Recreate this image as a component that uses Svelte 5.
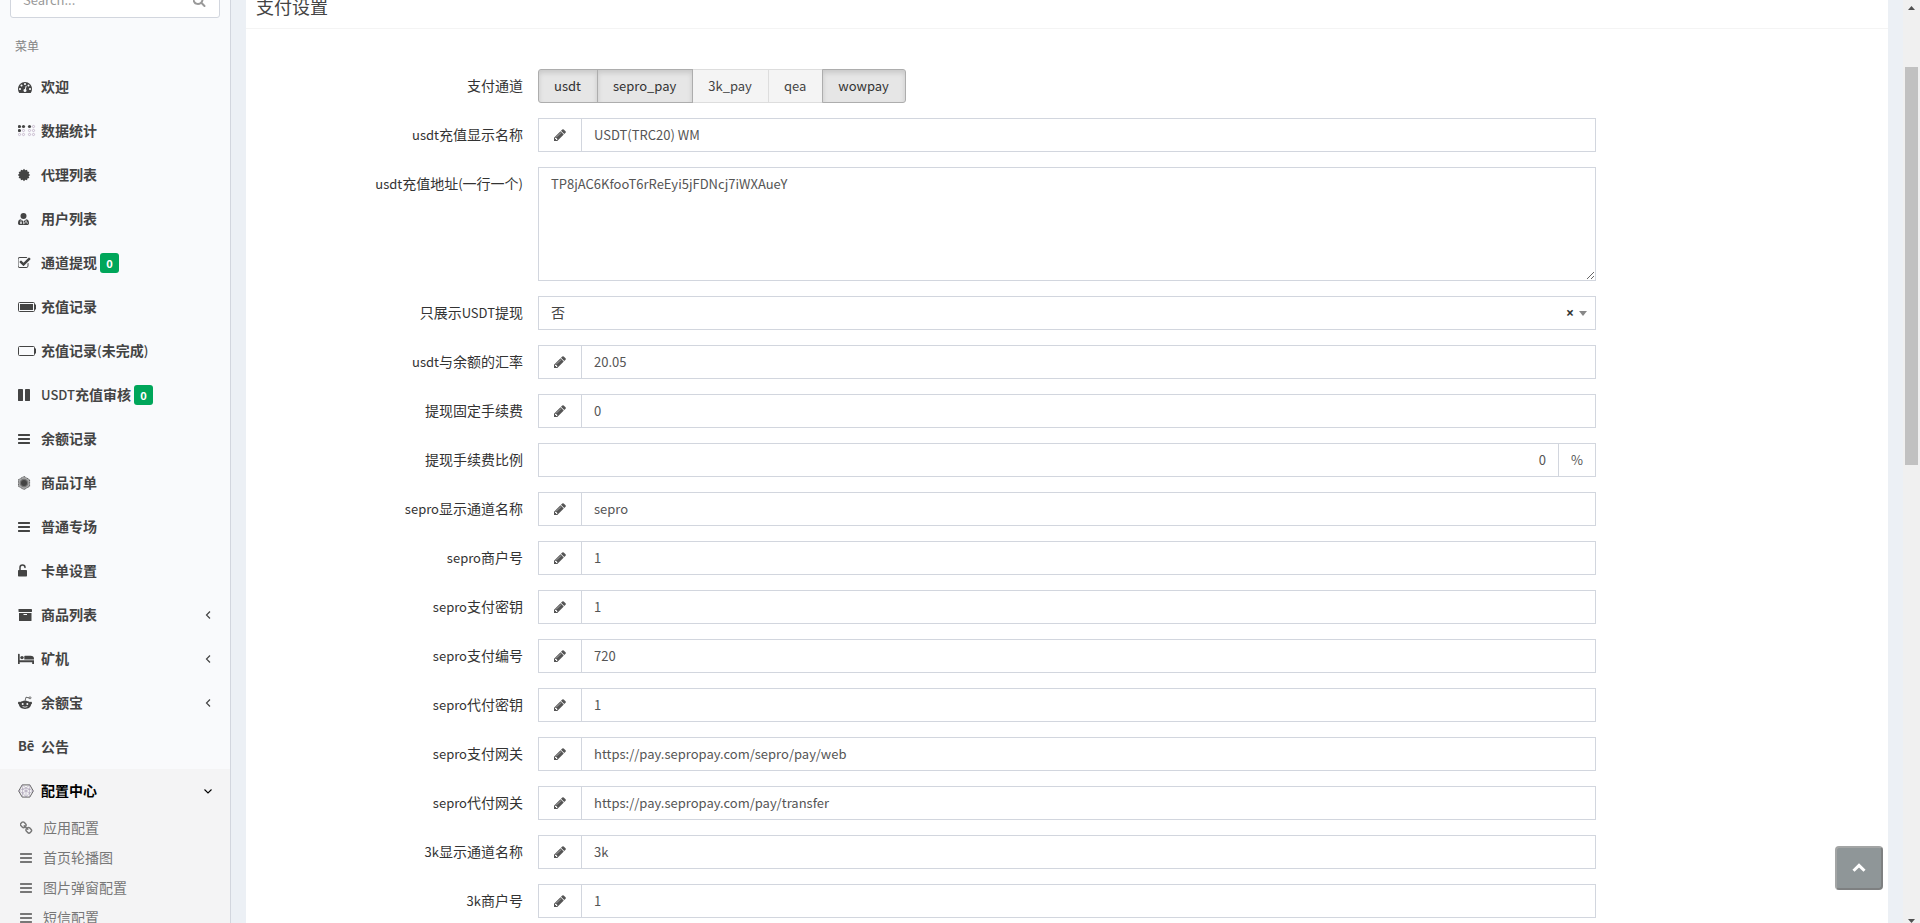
<script>
  const menu = [
    { icon: 'gauge', text: '欢迎' },
    { icon: 'braille', text: '数据统计' },
    { icon: 'certificate', text: '代理列表' },
    { icon: 'doctor', text: '用户列表' },
    { icon: 'check', text: '通道提现', badge: '0' },
    { icon: 'battery-full', text: '充值记录' },
    { icon: 'battery-empty', text: '充值记录(未完成)' },
    { icon: 'pause', text: 'USDT充值审核', badge: '0' },
    { icon: 'bars', text: '余额记录' },
    { icon: 'order', text: '商品订单' },
    { icon: 'bars', text: '普通专场' },
    { icon: 'unlock', text: '卡单设置' },
    { icon: 'archive', text: '商品列表', tree: true },
    { icon: 'bed', text: '矿机', tree: true },
    { icon: 'alien', text: '余额宝', tree: true },
    { icon: 'be', text: '公告' },
  ];

  const submenu = [
    { icon: 'link', text: '应用配置' },
    { icon: 'bars', text: '首页轮播图' },
    { icon: 'bars', text: '图片弹窗配置' },
    { icon: 'bars', text: '短信配置' },
  ];

  const channels = [
    { name: 'usdt', on: true },
    { name: 'sepro_pay', on: true },
    { name: '3k_pay', on: false },
    { name: 'qea', on: false },
    { name: 'wowpay', on: true },
  ];

  const fields = [
    { id: 'usdt-name', label: 'usdt充值显示名称', value: 'USDT(TRC20) WM' },
    { id: 'usdt-address', label: 'usdt充值地址(一行一个)', value: 'TP8jAC6KfooT6rReEyi5jFDNcj7iWXAueY', kind: 'area' },
    { id: 'usdt-only', label: '只展示USDT提现', value: '否', kind: 'select' },
    { id: 'usdt-rate', label: 'usdt与余额的汇率', value: '20.05' },
    { id: 'fee-fixed', label: '提现固定手续费', value: '0' },
    { id: 'fee-percent', label: '提现手续费比例', value: '0', kind: 'percent' },
    { id: 'sepro-name', label: 'sepro显示通道名称', value: 'sepro' },
    { id: 'sepro-merchant', label: 'sepro商户号', value: '1' },
    { id: 'sepro-pay-key', label: 'sepro支付密钥', value: '1' },
    { id: 'sepro-pay-code', label: 'sepro支付编号', value: '720' },
    { id: 'sepro-payout-key', label: 'sepro代付密钥', value: '1' },
    { id: 'sepro-pay-gateway', label: 'sepro支付网关', value: 'https://pay.sepropay.com/sepro/pay/web' },
    { id: 'sepro-payout-gateway', label: 'sepro代付网关', value: 'https://pay.sepropay.com/pay/transfer' },
    { id: '3k-name', label: '3k显示通道名称', value: '3k' },
    { id: '3k-merchant', label: '3k商户号', value: '1' },
  ];

  // Splits a label into runs of Latin and Chinese characters.
  const runs = (text) => text.match(/[\x20-\x7e]+|[^\x20-\x7e]+/g);
  const isLatin = (run) => /^[\x20-\x7e]/.test(run);

  const star = Array.from({ length: 24 }, (_, i) => {
    const r = i % 2 ? 4.8 : 6.2;
    const a = (i * Math.PI) / 12;
    return `${(6 + r * Math.sin(a)).toFixed(2)},${(7 - r * Math.cos(a)).toFixed(2)}`;
  }).join(' ');

  const filledDots = ['0-0', '4-0', '0-4', '10-0'];
</script>

{#snippet mixed(text)}
  {#each runs(text) as run}{#if isLatin(run)}<span class="latin">{run}</span>{:else}{run}{/if}{/each}
{/snippet}

{#snippet fa(d)}
  <svg width="14" height="14" viewBox="128 0 1792 1792" fill="currentColor" aria-hidden="true"><path {d} /></svg>
{/snippet}

{#snippet icon(name)}
  {#if name === 'bars'}
    {@render fa('M1664 1344v128q0 26-19 45t-45 19h-1408q-26 0-45-19t-19-45v-128q0-26 19-45t45-19h1408q26 0 45 19t19 45zm0-512v128q0 26-19 45t-45 19h-1408q-26 0-45-19t-19-45v-128q0-26 19-45t45-19h1408q26 0 45 19t19 45zm0-512v128q0 26-19 45t-45 19h-1408q-26 0-45-19t-19-45v-128q0-26 19-45t45-19h1408q26 0 45 19t19 45z')}
  {:else if name === 'pencil'}
    {@render fa('M491 1536l91-91-235-235-91 91v107h128v128h107zm523-928q0-22-22-22-10 0-17 7l-542 542q-7 7-7 17 0 22 22 22 10 0 17-7l542-542q7-7 7-17zm-54-192l416 416-832 832h-416v-416zm683 96q0 53-37 90l-166 166-416-416 166-165q36-38 90-38 53 0 91 38l235 234q37 39 37 91z')}
  {:else if name === 'search'}
    {@render fa('M1216 832q0-185-131.500-316.500t-316.500-131.500-316.500 131.500-131.500 316.500 131.500 316.500 316.500 131.500 316.500-131.500 131.500-316.500zm512 832q0 52-38 90t-90 38q-54 0-90-38l-343-342q-179 124-399 124-143 0-273.500-55.500t-225-150-150-225-55.500-273.500 55.500-273.500 150-225 225-150 273.500-55.500 273.500 55.500 225 150 150 225 55.500 273.500q0 220-124 399l343 343q37 37 37 90z')}
  {:else if name === 'check'}
    {@render fa('M1472 930v318q0 119-84.500 203.500t-203.500 84.500h-832q-119 0-203.500-84.500t-84.500-203.500v-832q0-119 84.500-203.500t203.500-84.500h832q63 0 117 25 15 7 18 23 3 17-9 29l-49 49q-10 10-23 10-3 0-9-2-23-6-45-6h-832q-66 0-113 47t-47 113v832q0 66 47 113t113 47h832q66 0 113-47t47-113v-254q0-13 9-22l64-64q10-10 23-10 6 0 12 3 20 8 20 29zm231-489l-814 814q-24 24-57 24t-57-24l-430-430q-24-24-24-57t24-57l110-110q24-24 57-24t57 24l263 263 647-647q24-24 57-24t57 24l110 110q24 24 24 57t-24 57z')}
  {:else if name === 'link'}
    {@render fa('M1520 1216q0-40-28-68l-208-208q-28-28-68-28-42 0-72 32 3 3 19 18.500t21.500 21.500 15 19 13 25.500 3.500 27.500q0 40-28 68t-68 28q-15 0-27.500-3.500t-25.500-13-19-15-21.500-21.500-18.500-19q-33 31-33 73 0 40 28 68l206 207q27 27 68 27 40 0 68-26l147-146q28-28 28-67zm-703-705q0-40-28-68l-206-207q-28-28-68-28-39 0-68 27l-147 146q-28 28-28 67 0 40 28 68l208 208q27 27 68 27 42 0 72-31-3-3-19-18.500t-21.500-21.500-15-19-13-25.500-3.500-27.500q0-40 28-68t68-28q15 0 27.500 3.500t25.500 13 19 15 21.500 21.500 18.500 19q33-31 33-73zm895 705q0 120-85 203l-147 146q-83 83-203 83-121 0-204-85l-206-207q-83-83-83-203 0-123 88-209l-88-88q-86 88-208 88-120 0-204-84l-208-208q-84-84-84-204t85-203l147-146q83-83 203-83 121 0 204 85l206 207q83 83 83 203 0 123-88 209l88 88q86-88 208-88 120 0 204 84l208 208q84 84 84 204z')}
  {:else if name === 'gauge'}
    <svg width="14" height="14" viewBox="0 0 1792 1792" fill="currentColor" aria-hidden="true"><path d="M384 1152q0-53-37.500-90.500t-90.500-37.500-90.500 37.500-37.500 90.500 37.500 90.500 90.500 37.500 90.500-37.500 37.500-90.500zm192-448q0-53-37.500-90.500t-90.500-37.500-90.500 37.500-37.500 90.500 37.500 90.500 90.500 37.500 90.500-37.500 37.500-90.500zm428 481l101-382q6-26-7.500-48.500t-38.500-29.500-48 6.500-30 39.500l-101 382q-60 5-107 43.500t-63 98.500q-20 77 20 146t117 89 146-20 89-117q16-60-6-117t-72-91zm660-33q0-53-37.500-90.500t-90.500-37.500-90.500 37.500-37.500 90.500 37.500 90.500 90.500 37.500 90.500-37.500 37.500-90.500zm-640-640q0-53-37.500-90.500t-90.500-37.500-90.500 37.500-37.500 90.500 37.500 90.500 90.500 37.500 90.500-37.500 37.500-90.500zm448 192q0-53-37.500-90.500t-90.500-37.500-90.500 37.500-37.500 90.500 37.500 90.500 90.500 37.500 90.500-37.500 37.500-90.500zm320 448q0 261-141 483-19 29-54 29h-1402q-35 0-54-29-141-221-141-483 0-182 71-348t191-286 286-191 348-71 348 71 286 191 191 286 71 348z" /></svg>
  {:else}
    <svg width="18" height="14" viewBox="0 0 18 14" fill="currentColor" aria-hidden="true">
      {#if name === 'braille'}
        {#each [0, 4, 10, 14] as x}
          {#each [0, 4, 8] as y}
            {#if filledDots.includes(`${x}-${y}`)}
              <circle cx={x + 1.5} cy={y + 2.5} r="1.6" />
            {:else}
              <circle cx={x + 1.5} cy={y + 2.5} r="1.1" fill="none" stroke="#c3b4ca" stroke-width="0.9" />
            {/if}
          {/each}
        {/each}
      {:else if name === 'certificate'}
        <polygon points={star} />
      {:else if name === 'doctor'}
        <circle cx="5.500" cy="4" r="3" />
        <path d="M2.500 7.200 5.500 9.200l3-2C10.300 7.500 11 9 11 11.200c0 1.200-.7 1.800-1.800 1.800H1.800C.7 13 0 12.400 0 11.200 0 9 .7 7.500 2.500 7.200z" />
        <path d="M3 8.200v2.300M8 8.200v1.600M6.700 11.800v-1q0-1 1.300-1t1.300 1v1M5.500 9.200v3" fill="none" stroke="#f9fafc" stroke-width=".7" />
        <circle cx="3" cy="11" r=".9" fill="#f9fafc" />
      {:else if name === 'battery-full' || name === 'battery-empty'}
        <rect x=".5" y="2.500" width="16" height="9" rx="1" fill="none" stroke="currentColor" />
        <path d="M17 4.500h1v5h-1z" />
        {#if name === 'battery-full'}<rect x="2" y="4" width="13" height="6" />{/if}
      {:else if name === 'pause'}
        <rect x="0" y="1" width="5" height="12" rx=".4" /><rect x="7" y="1" width="5" height="12" rx=".4" />
      {:else if name === 'order'}
        <path d="M6 .4l5.600 3.300v6.600L6 13.600.4 10.300V3.700z" opacity=".45" />
        <path d="M6 .4l5.600 3.300v6.600L6 13.600.4 10.300V3.700z" fill="none" stroke="currentColor" stroke-width=".8" stroke-dasharray="1.200 .5" />
        <circle cx="6" cy="7" r="4.300" opacity=".5" />
        <circle cx="6" cy="7" r="3" />
      {:else if name === 'unlock'}
        <rect x="0" y="6" width="9" height="6.500" rx=".7" />
        <path d="M2 6.500V3.500Q2 1 4.500 1T7 3.500" fill="none" stroke="currentColor" stroke-width="1.500" stroke-linecap="round" />
      {:else if name === 'archive'}
        <rect x=".5" y="1" width="13.500" height="3" rx=".4" />
        <path d="M1 5h12.500v7.500q0 .5-.5.5H1.500q-.5 0-.5-.5zM5.500 6v1h3.500v-1z" fill-rule="evenodd" />
      {:else if name === 'bed'}
        <path d="M0 2.200q0-.5.700-.5h.3q.7 0 .7.500V8.300H16V12h-1.800V10.300H1.700V12H0z" />
        <circle cx="4" cy="5.600" r="1.700" />
        <path d="M6.300 4.300q0-.6.700-.6h5.500Q16 3.700 16 7v.5H6.300z" />
      {:else if name === 'alien'}
        <path d="M2 6.200C3.300 5.400 5 4.800 7 4.800s3.700.6 5 1.400c1-.8 2 0 2 .9 0 .8-.4 1.200-1 1.500C13 11.200 10.300 13 7 13S1 11.200 1 8.600C.4 8.300 0 7.900 0 7.100c0-.9 1-1.700 2-.9z" />
        <path d="M7 5 8 1.200l3.300.8" fill="none" stroke="currentColor" stroke-width=".8" />
        <circle cx="12" cy="1.800" r="1" fill="none" stroke="currentColor" stroke-width=".7" />
        <circle cx="4.700" cy="8" r="1" fill="#f9fafc" /><circle cx="9.300" cy="8" r="1" fill="#f9fafc" />
        <path d="M4.600 10.500q2.400 1.400 4.800 0" fill="none" stroke="#f9fafc" stroke-width=".8" />
      {:else if name === 'hexagon'}
        <path d="M4.200.9h7.600L15.300 7l-3.500 6.100H4.200L.7 7z" fill="none" stroke="#555" stroke-width=".9" />
        <path d="M4.200.9 8 4l3.800-3.100M.7 7 4.500 5 8 4l3.800 1.200L15.300 7M.7 7l4 2L8 13l3.500-4 3.800-2M4.500 5v4l7-4v4l-7-4M4.200.9 4.500 5M11.800.9v4.300M4.700 9l-.5 4.100M11.500 9l.3 4.100M8 4v9" fill="none" stroke="#9a8fa8" stroke-width=".5" />
      {/if}
    </svg>
  {/if}
{/snippet}

<div class="app">
  <aside class="sidebar">
    <form class="search" onsubmit={(e) => e.preventDefault()}>
      <input type="text" placeholder="Search..." aria-label="Search" />
      <button type="submit" aria-label="Search">{@render icon('search')}</button>
    </form>
    <nav>
      <h2 class="menu-title">菜单</h2>
      <ul>
        {#each menu as item}
          <li>
            <a class="item" href="#menu">
              <span class="slot">{#if item.icon === 'be'}<span class="be">Bē</span>{:else}{@render icon(item.icon)}{/if}</span>
              <span class="name">{@render mixed(item.text)}</span>
              {#if item.badge}<span class="badge">{item.badge}</span>{/if}
              {#if item.tree}
                <svg class="angle" width="8" height="10" viewBox="0 0 8 10" aria-hidden="true"><path d="M6 1.500 2.500 5 6 8.500" fill="none" stroke="currentColor" stroke-width="1.200" /></svg>
              {/if}
            </a>
          </li>
        {/each}
        <li class="open">
          <a class="item" href="#menu">
            <span class="slot">{@render icon('hexagon')}</span>
            <span class="name">配置中心</span>
            <svg class="angle" width="8" height="10" viewBox="0 0 8 10" aria-hidden="true"><path d="M.5 3.500 4 7l3.500-3.500" fill="none" stroke="currentColor" stroke-width="1.100" /></svg>
          </a>
          <ul>
            {#each submenu as item}
              <li>
                <a class="subitem" href="#menu"><span class="slot">{@render icon(item.icon)}</span><span class="name">{item.text}</span></a>
              </li>
            {/each}
          </ul>
        </li>
      </ul>
    </nav>
  </aside>

  <main>
    <section class="box">
      <header><h1>支付设置</h1></header>
      <form class="settings" onsubmit={(e) => e.preventDefault()}>
        <div class="row">
          <span class="label" id="channels">支付通道</span>
          <div class="field">
            <div class="group" role="group" aria-labelledby="channels">
              {#each channels as c}
                <label class="toggle"><input type="checkbox" bind:checked={c.on} />{c.name}</label>
              {/each}
            </div>
          </div>
        </div>
        {#each fields as f}
          <div class="row">
            <label class="label" for={f.id}>{@render mixed(f.label)}</label>
            <div class="field">
              {#if f.kind === 'area'}
                <textarea id={f.id} rows="5" spellcheck="false">{f.value}</textarea>
              {:else if f.kind === 'select'}
                <div class="select">
                  <select id={f.id}><option>否</option><option>是</option></select>
                  <button type="button" class="clear" aria-label="清除">×</button>
                  <span class="caret"></span>
                </div>
              {:else if f.kind === 'percent'}
                <div class="control">
                  <input class="number" id={f.id} type="text" value={f.value} />
                  <span class="unit">%</span>
                </div>
              {:else}
                <div class="control">
                  <span class="addon">{@render icon('pencil')}</span>
                  <input id={f.id} type="text" value={f.value} />
                </div>
              {/if}
            </div>
          </div>
        {/each}
      </form>
    </section>
  </main>

  <div class="scrollbar" aria-hidden="true">
    <svg width="7" height="4" viewBox="0 0 7 4"><path d="M0 4 3.500 0 7 4z" fill="#505050" /></svg>
    <div class="track"><div class="thumb"></div></div>
    <svg width="7" height="4" viewBox="0 0 7 4"><path d="M0 0h7L3.500 4z" fill="#505050" /></svg>
  </div>

  <button type="button" class="totop" aria-label="返回顶部">
    <svg width="14" height="10" viewBox="0 0 14 10" aria-hidden="true"><path d="M1.500 7.800 7 2.400l5.500 5.400" fill="none" stroke="#fff" stroke-width="3" /></svg>
  </button>
</div>

<style>
  :global(body) {
    margin: 0;
    overflow: hidden;
  }

  .app {
    display: flex;
    height: 100vh;
    overflow: hidden;
    background: #ecf0f5;
    color: #333;
    font: 14px/20px "Noto Sans CJK SC", sans-serif;
  }

  .app *,
  .app *::before {
    box-sizing: border-box;
  }

  ul {
    list-style: none;
    margin: 0;
    padding: 0;
  }

  a {
    text-decoration: none;
  }

  svg {
    display: block;
    flex: none;
  }

  input,
  textarea,
  select,
  button {
    font: inherit;
    margin: 0;
  }

  .latin {
    font-size: 13px;
  }

  /* Sidebar */
  .sidebar {
    flex: none;
    width: 231px;
    background: #f9fafc;
    border-right: 1px solid #d2d6de;
  }

  .search {
    display: flex;
    height: 36px;
    margin: -18px 10px 10px;
    background: #fff;
    border: 1px solid #d2d6de;
    border-radius: 3px;
  }

  .search input {
    flex: 1;
    min-width: 0;
    padding: 0 12px;
    border: 0;
    background: none;
    font-size: 13px;
    outline: 0;
  }

  .search input::placeholder {
    color: #999;
  }

  .search button {
    padding: 0 12px;
    border: 0;
    background: none;
    color: #999;
  }

  .menu-title {
    margin: 0;
    padding: 8px 15px 9px;
    font-size: 12px;
    font-weight: 400;
    color: #848484;
  }

  .item {
    display: flex;
    align-items: center;
    height: 44px;
    padding: 0 18px;
    color: #444;
    font-weight: 600;
  }

  .name {
    padding-bottom: 2px;
  }

  .slot {
    flex: none;
    width: 20px;
    margin-right: 3px;
  }

  .item .latin {
    font-weight: 500;
  }

  .be {
    display: block;
    padding-bottom: 2px;
    font-size: 13px;
    font-weight: 700;
  }

  .badge {
    min-width: 19px;
    margin-left: 3px;
    padding: 0 6px;
    border-radius: 3px;
    background: #00a65a;
    color: #fff;
    font-size: 11px;
    font-weight: 700;
    text-align: center;
  }

  .angle {
    margin-left: auto;
  }

  .open {
    background: #f4f4f5;
  }

  .open > .item {
    color: #000;
  }

  .subitem {
    display: flex;
    align-items: center;
    height: 30px;
    padding-left: 20px;
    color: #777;
  }

  /* Content */
  main {
    flex: 1;
    min-width: 0;
    padding: 0 15px;
  }

  .box {
    min-height: 100vh;
    background: #fff;
  }

  header {
    margin-top: -14px;
    padding: 10px 10px 11px;
    border-bottom: 1px solid #f4f4f4;
  }

  h1 {
    margin: 0;
    font-size: 18px;
    line-height: 21px;
    font-weight: 400;
    color: #444;
  }

  .box::before {
    content: "";
    display: table;
  }

  .settings {
    display: flex;
    flex-direction: column;
    gap: 15px;
    padding: 40px 5px;
  }

  .row {
    display: grid;
    grid-template-columns: 2fr 8fr 2fr;
    align-items: start;
  }

  .label {
    padding-top: 6px;
    text-align: right;
  }

  .field {
    min-width: 0;
    padding: 0 15px;
  }

  .group,
  .control {
    display: flex;
    height: 34px;
  }

  .toggle {
    position: relative;
    padding: 6px 16px 6px 15px;
    border: 1px solid #ddd;
    background: #f4f4f4;
    color: #444;
    font-size: 13px;
  }

  .toggle + .toggle {
    margin-left: -1px;
  }

  .toggle:first-child {
    border-radius: 3px 0 0 3px;
  }

  .toggle:last-child {
    border-radius: 0 3px 3px 0;
  }

  .toggle:has(:checked) {
    z-index: 1;
    border-color: #adadad;
    background: #e6e6e6;
    color: #333;
    box-shadow: inset 0 3px 5px rgba(0, 0, 0, 0.125);
  }

  .toggle input {
    position: absolute;
    opacity: 0;
    pointer-events: none;
  }

  .control input,
  textarea,
  select {
    flex: 1;
    min-width: 0;
    border: 1px solid #d2d6de;
    border-radius: 0;
    background: #fff;
    color: #555;
    padding: 6px 12px;
    font-size: 13px;
    outline: 0;
  }

  .control .number {
    text-align: right;
  }

  .addon,
  .unit {
    display: flex;
    align-items: center;
    justify-content: center;
    border: 1px solid #d2d6de;
    color: #555;
  }

  .addon {
    width: 43px;
    padding-left: 2px;
    border-right: 0;
  }

  .unit {
    width: 37px;
    border-left: 0;
    font-size: 13px;
  }

  textarea {
    display: block;
    width: 100%;
    line-height: 20px;
    resize: vertical;
  }

  .select {
    position: relative;
  }

  select {
    display: block;
    width: 100%;
    height: 34px;
    padding: 5px 12px 7px;
    appearance: none;
    color: #444;
    font-size: 14px;
  }

  .clear {
    position: absolute;
    top: 7px;
    right: 22px;
    padding: 0;
    border: 0;
    background: none;
    color: #333;
    font: 700 14px/20px "Open Sans", sans-serif;
  }

  .caret {
    position: absolute;
    top: 15px;
    right: 9px;
    border: 4px solid transparent;
    border-top: 5px solid #888;
    border-bottom: 0;
  }

  /* Window furniture */
  .scrollbar {
    flex: none;
    display: flex;
    flex-direction: column;
    align-items: center;
    width: 17px;
    padding: 6px 0 0;
    background: #f0f0f0;
  }

  .track {
    flex: 1;
    display: flex;
    flex-direction: column;
    width: 13px;
    padding-top: 57px;
  }

  .thumb {
    flex: none;
    height: 398px;
    background: #c1c1c1;
  }

  .totop {
    position: fixed;
    right: 37px;
    bottom: 33px;
    display: flex;
    align-items: center;
    justify-content: center;
    width: 48px;
    height: 44px;
    padding: 0;
    border: 2px solid;
    border-color: #a3a5a5 #7e8081 #7e8081 #a3a5a5;
    border-radius: 4px;
    background: #8f9698;
  }
</style>
